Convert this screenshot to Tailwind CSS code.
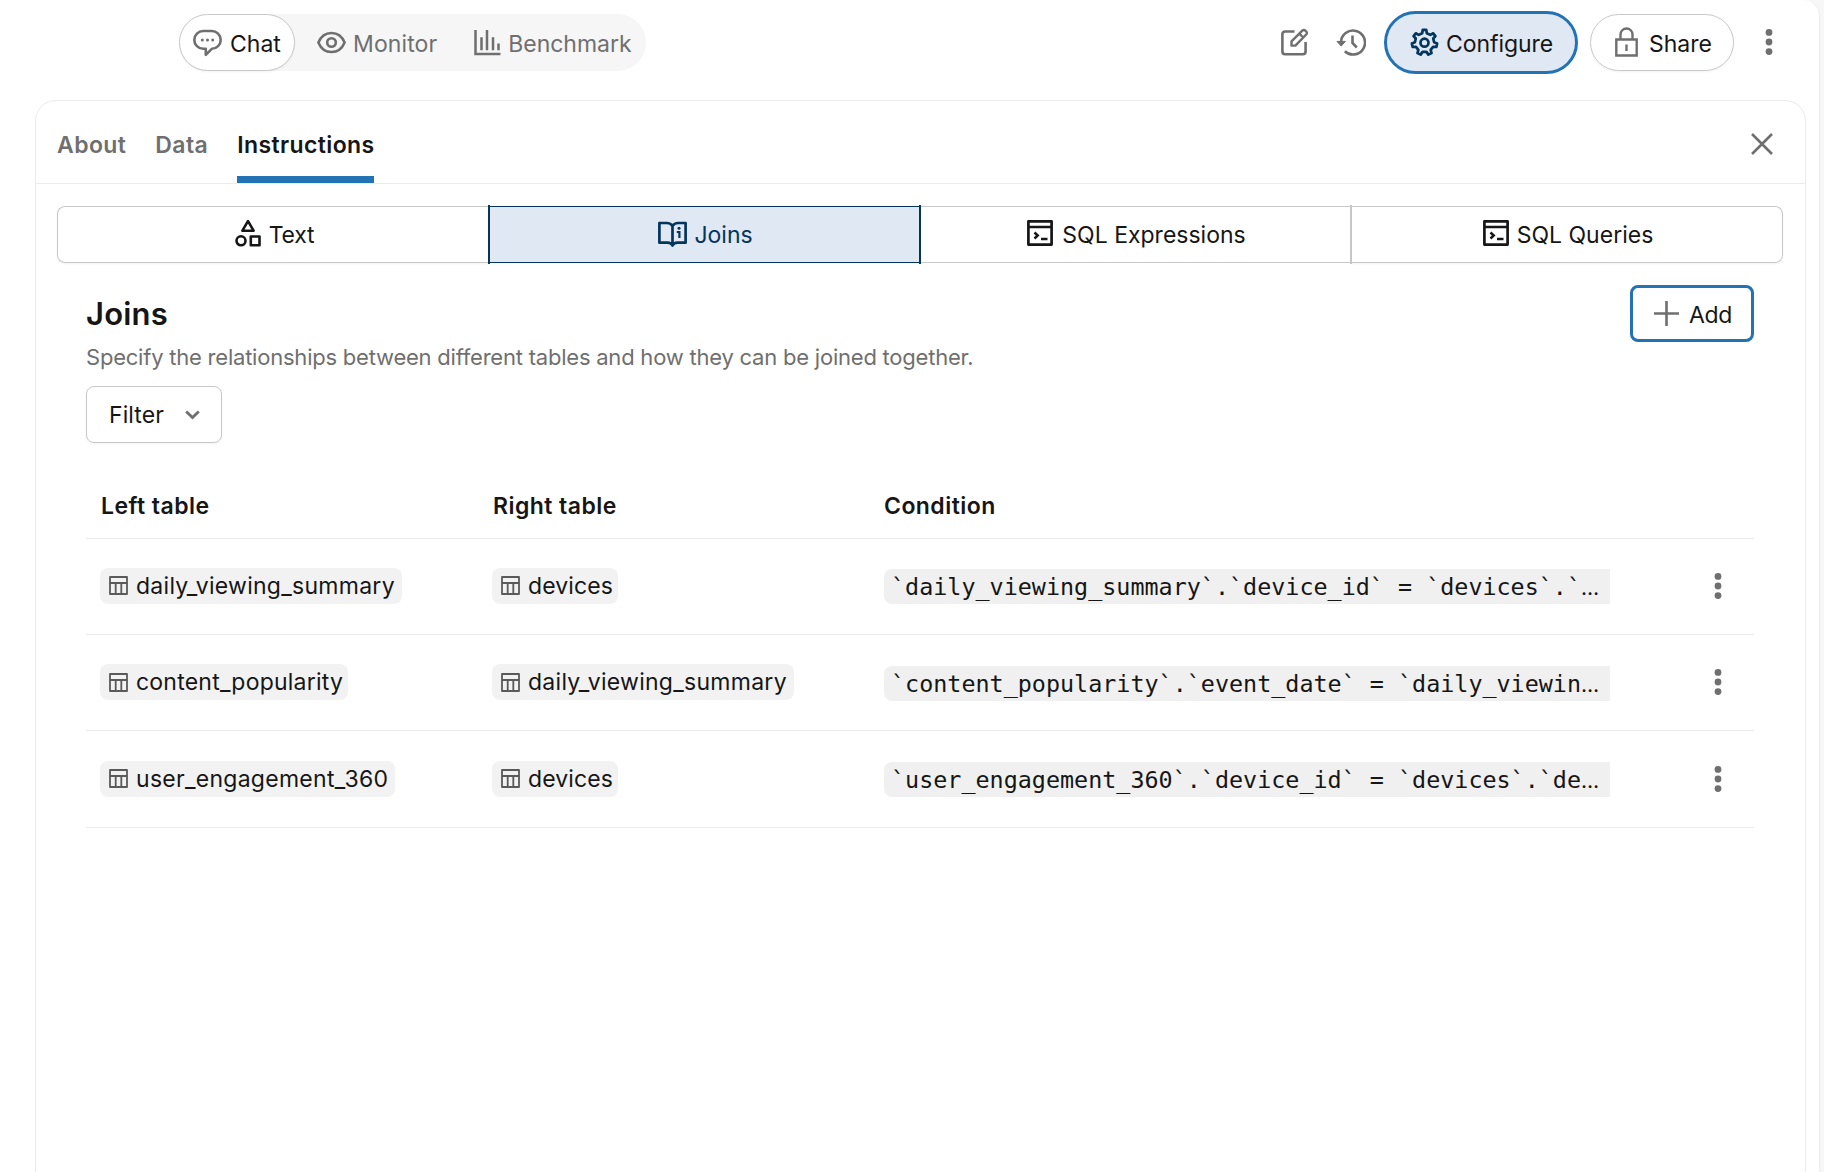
<!DOCTYPE html>
<html lang="en">
  <head>
    <meta charset="UTF-8" />
    <meta name="viewport" content="width=device-width, initial-scale=1.0" />
    <title>Configure - Joins</title>

    <!-- Tailwind CSS -->
    <script src="https://cdn.jsdelivr.net/npm/@tailwindcss/browser@4"></script>
  </head>
  <body class="h-screen overflow-hidden bg-[#f7f7f7] font-['Inter',sans-serif] text-[23px] leading-[30px] text-[#161616]">
    <!-- Shared icons -->
    <svg class="hidden">
      <symbol id="icon-table" viewBox="0 0 19 19">
        <path d="M1 1h17v17H1zM1 7h17M6.7 7v11M12.3 7v11" fill="none" stroke="currentColor" stroke-width="1.8" stroke-linejoin="round" />
      </symbol>
      <symbol id="icon-terminal" viewBox="0 0 26 26">
        <path d="M1.4 1.4h23.2v23.2H1.4zM1.4 7h23.2" fill="none" stroke="currentColor" stroke-width="2.7" stroke-linejoin="round" />
        <path d="M7.5 12.5l3.2 3-3.2 3M14 19h6.5" fill="none" stroke="currentColor" stroke-width="2.5" />
      </symbol>
      <symbol id="icon-kebab" viewBox="0 0 8 28">
        <g fill="currentColor"><circle cx="4" cy="4.4" r="3.4" /><circle cx="4" cy="14" r="3.4" /><circle cx="4" cy="23.6" r="3.4" /></g>
      </symbol>
    </svg>

    <div class="flex h-full w-[1820px] flex-col rounded-tr-2xl border-r border-[#ebebeb] bg-white">
      <!-- Top bar -->
      <header class="flex h-[100px] items-start justify-between pl-[179px] pr-[46px]">
        <nav class="mt-3.5 flex h-[57px] w-[467px] rounded-full bg-[#f6f6f6] text-[#6f6f6f]">
          <button class="flex h-[57px] w-[116px] items-center rounded-full border border-[#c8c8c8] bg-white pl-[13px] shadow-xs">
            <svg class="h-[29px] w-[29px]" viewBox="0 0 29 29" fill="none" stroke="currentColor" stroke-width="2.6" stroke-linejoin="round">
              <path d="M10.2 3h8.6a8.9 8.9 0 0 1 0 17.8l-6 6v-6h-2.6a8.9 8.9 0 0 1 0-17.8z" />
              <g fill="currentColor" stroke="none"><circle cx="9.3" cy="12" r="1.5" /><circle cx="14.5" cy="12" r="1.5" /><circle cx="19.7" cy="12" r="1.5" /></g>
            </svg>
            <span class="ml-2 mt-0.5 text-[#161616]">Chat</span>
          </button>
          <button class="ml-[22px] flex items-center">
            <svg class="h-[29px] w-[29px]" viewBox="0 0 29 29" fill="none" stroke="currentColor" stroke-width="2.6" stroke-linejoin="round">
              <path d="M1.4 14.5C4 8.2 8.8 5 14.5 5s10.5 3.2 13.1 9.500C25 20.8 20.2 24 14.5 24S4 20.8 1.4 14.5z" />
              <circle cx="14.5" cy="14.5" r="4.3" />
            </svg>
            <span class="ml-[7px] mt-0.5 tracking-[0.1px]">Monitor</span>
          </button>
          <button class="ml-[37px] flex items-center">
            <svg class="h-[27px] w-[27px]" viewBox="0 0 27 27" fill="none" stroke="currentColor" stroke-width="2.5">
              <path d="M1.5 1v24h25M7.5 8.2v13M13 1v20.2M19 8.2v13M24.5 14.5v6.7" />
            </svg>
            <span class="ml-[7px] mt-0.5">Benchmark</span>
          </button>
        </nav>

        <div class="flex items-center text-[#6f6f6f]">
          <svg class="mt-2.5 h-[29px] w-[29px]" viewBox="0 0 29 29" fill="none" stroke="currentColor" stroke-width="2.6" stroke-linejoin="round">
            <path d="M14.5 3.5H5A2.6 2.6 0 0 0 2.4 6.100v17.500A2.6 2.6 0 0 0 5 26.200h18a2.6 2.6 0 0 0 2.6-2.6V14" />
            <path d="M11.5 17.600v-4.200L22.300 2.600a2.100 2.100 0 0 1 3 0l.9.900a2.100 2.100 0 0 1 0 3L15.400 17.600zM19.300 5.600l3.900 3.900" stroke-width="2.4" />
          </svg>
          <svg class="ml-[27px] mt-2.5 h-[29px] w-[30px]" viewBox="0 0 30 29" fill="none" stroke="currentColor" stroke-width="2.6">
            <path d="M5 14.500a12 12 0 1 1 3.800 8.800M16.500 7.500v7.400l4.300 4.600" />
            <path d="M1 13.400h8.400l-4.200 4.700z" fill="currentColor" stroke-width="1" stroke-linejoin="round" />
          </svg>
          <button class="ml-[18px] mt-[11px] flex h-[63px] w-[194px] items-center rounded-full border-3 border-[#2272b4] bg-[#dfe8f3] pl-[23px] text-[#161616]">
            <svg class="h-[29px] w-[29px] text-[#04355d]" viewBox="0 0 16 16" fill="none" stroke="currentColor" stroke-width="1.5" stroke-linejoin="round">
              <path d="M6.72 2.86L7.03 1.07H8.97L9.28 2.86 11.22 3.79 12.81 2.92 14.03 4.44 12.82 5.8 13.3 7.89 14.97 8.59 14.54 10.49 12.73 10.4 11.39 12.08 11.88 13.82 10.13 14.67 9.08 13.19H6.92L5.87 14.67 4.12 13.82 4.61 12.08 3.27 10.4 1.46 10.49 1.03 8.59 2.7 7.89 3.18 5.8 1.97 4.44 3.19 2.92 4.78 3.79z" />
              <circle cx="8" cy="8.1" r="2.2" />
            </svg>
            <span class="ml-[7px] mt-0.5 tracking-[-0.05px]">Configure</span>
          </button>
          <button class="ml-3 mt-[11px] flex h-[57px] w-[144px] items-center rounded-full border border-[#c8c8c8] pl-6 shadow-xs">
            <svg class="h-[31px] w-[23px]" viewBox="0 0 23 31" fill="none" stroke="currentColor" stroke-width="2.4">
              <path d="M1.3 12.500h20.4v16H1.300zM5.500 12.500V7.500a6 6 0 0 1 12 0v5M11.500 17.500v6.500" />
            </svg>
            <span class="ml-[11px] mt-0.5 text-[#161616]">Share</span>
          </button>
          <svg class="ml-[31px] mt-2.5 h-7 w-2"><use href="#icon-kebab" /></svg>
        </div>
      </header>

      <!-- Configure panel -->
      <main class="ml-[35px] w-[1771px] flex-1 rounded-t-[21px] border border-b-0 border-[#ebebeb]">
        <div class="flex h-[83px] items-start justify-between border-b border-[#ebebeb] pl-[21px] pr-8">
          <div class="flex gap-[29px] font-semibold tracking-[0.4px] text-[#6f6f6f]">
            <span class="pt-[29px]">About</span>
            <span class="pt-[29px]">Data</span>
            <span class="flex h-[82px] w-[137px] flex-col justify-between whitespace-nowrap pt-[29px] text-[#161616]">
              Instructions
              <span class="h-[7px] bg-[#2272b4]"></span>
            </span>
          </div>
          <svg class="mt-8 h-[22px] w-[22px] text-[#6f6f6f]" viewBox="0 0 22 22" fill="none" stroke="currentColor" stroke-width="2.6">
            <path d="M1 1l20 20M21 1L1 21" />
          </svg>
        </div>

        <!-- Instruction types -->
        <div class="ml-[21px] mt-[21px] flex h-[59px] w-[1726px] items-center">
          <button class="flex h-[57px] w-[431px] items-center justify-center rounded-l-lg border border-r-0 border-[#c8c8c8] pl-[3px] shadow-xs">
            <svg class="mb-1 h-[28px] w-[26px]" viewBox="0 0 26 28" fill="none" stroke="currentColor" stroke-width="2.6" stroke-linejoin="round">
              <path d="M13 2.200L18.600 11.700H7.400zM15.800 17.500h8.700v8.700h-8.700z" />
              <circle cx="6" cy="21.800" r="4.500" />
            </svg>
            <span class="ml-2 tracking-[-0.3px]">Text</span>
          </button>
          <div class="flex h-[59px] w-[433px] items-center border-x-2 border-[#04355d]">
            <button class="flex h-[57px] w-full items-center justify-center border-y border-[#04355d] bg-[#dfe8f3] pl-0.5 text-[#04355d]">
              <svg class="h-[27px] w-[29px]" viewBox="0 0 29 27" fill="none" stroke="currentColor" stroke-width="2.7" stroke-linejoin="round">
                <path d="M14.5 5C13.3 3 11.3 2 8.8 2H1.4v19.7h8.200c2.4 0 4.1.9 4.9 2.8.8-1.9 2.5-2.8 4.9-2.8h8.2V2h-7.4c-2.5 0-4.5 1-5.700 3zM14.5 5v19.5" />
                <path d="M18.8 11h2.6v6" stroke-width="2.2" stroke-linejoin="miter" />
                <circle cx="21" cy="7.3" r="1.5" fill="currentColor" stroke="none" />
              </svg>
              <span class="ml-[7px]">Joins</span>
            </button>
          </div>
          <div class="flex h-[59px] w-[431px] items-center border-r-2 border-[#c8c8c8]">
            <button class="flex h-[57px] w-full items-center justify-center border-y border-[#c8c8c8] pl-0.5">
              <svg class="mb-1 h-[26px] w-[26px]"><use href="#icon-terminal" /></svg>
              <span class="ml-[9px]">SQL Expressions</span>
            </button>
          </div>
          <button class="flex h-[57px] w-[431px] items-center justify-center rounded-r-lg border border-l-0 border-[#c8c8c8] pl-0.5 shadow-xs">
            <svg class="mb-1 h-[26px] w-[26px]"><use href="#icon-terminal" /></svg>
            <span class="ml-2">SQL Queries</span>
          </button>
        </div>

        <!-- Joins -->
        <section class="ml-[50px] mt-[21px] w-[1668px]">
          <div class="flex h-[57px] justify-between">
            <h2 class="pt-[11px] text-[31px] font-semibold leading-9 tracking-[0.2px]">Joins</h2>
            <button class="flex w-[124px] items-center rounded-lg border-3 border-[#2272b4] pl-[21px]">
              <svg class="h-[25px] w-[25px] text-[#6f6f6f]" viewBox="0 0 25 25" fill="none" stroke="currentColor" stroke-width="2.6">
                <path d="M12.5 0v25M0 12.5h25" />
              </svg>
              <span class="ml-2.5 mt-0.5 tracking-[-0.3px]">Add</span>
            </button>
          </div>
          <p class="text-[22px] leading-[30px] tracking-[-0.22px] text-[#6f6f6f]">Specify the relationships between different tables and how they can be joined together.</p>
          <button class="mt-[14px] flex h-[57px] w-[136px] items-center rounded-lg border border-[#c8c8c8] pl-[22px] shadow-xs">
            <span class="mt-px tracking-[0.1px]">Filter</span>
            <svg class="ml-[21px] mt-px h-2.5 w-[15px] text-[#6f6f6f]" viewBox="0 0 15 10" fill="none" stroke="currentColor" stroke-width="2.8">
              <path d="M1.2 1.5l6.300 6 6.300-6" />
            </svg>
          </button>

          <!-- Table -->
          <div class="mt-[31px]">
            <div class="grid h-[65px] grid-cols-[392px_392px_1fr] items-center border-b border-[#ebebeb] pl-[14px] pb-px font-semibold tracking-[0.45px]">
              <span class="pl-px">Left table</span>
              <span class="pl-px">Right table</span>
              <span>Condition</span>
            </div>

            <div class="grid h-24 grid-cols-[392px_392px_726px_1fr] items-center border-b border-[#ebebeb] pl-[14px]">
              <span class="mb-0.5 flex h-9 w-fit items-center rounded-lg bg-[#f2f2f2] pl-[9px] pr-[7px] tracking-[0.28px]">
                <svg class="mr-2 h-[19px] w-[19px] text-[#5a5a5a]"><use href="#icon-table" /></svg>daily_viewing_summary
              </span>
              <span class="mb-0.5 flex h-9 w-fit items-center rounded-lg bg-[#f2f2f2] pl-[9px] pr-[5px] tracking-[0.1px]">
                <svg class="mr-2 h-[19px] w-[19px] text-[#5a5a5a]"><use href="#icon-table" /></svg>devices
              </span>
              <code class="h-[35px] whitespace-pre rounded-l-lg bg-[#f0f0f0] pl-[7px] font-['DejaVu_Sans_Mono',monospace] text-[23.4px] leading-[37px]">`daily_viewing_summary`.`device_id` = `devices`.`<span class="font-['Inter',sans-serif] text-[21px]">…</span></code>
              <button class="mb-px pl-[104px] text-[#6f6f6f]"><svg class="mb-px h-7 w-2"><use href="#icon-kebab" /></svg></button>
            </div>

            <div class="grid h-24 grid-cols-[392px_392px_726px_1fr] items-center border-b border-[#ebebeb] pl-[14px]">
              <span class="mb-px flex h-9 w-fit items-center rounded-lg bg-[#f2f2f2] pl-[9px] pr-[5px] tracking-[0.22px]">
                <svg class="mr-2 h-[19px] w-[19px] text-[#5a5a5a]"><use href="#icon-table" /></svg>content_popularity
              </span>
              <span class="mb-px flex h-9 w-fit items-center rounded-lg bg-[#f2f2f2] pl-[9px] pr-[7px] tracking-[0.28px]">
                <svg class="mr-2 h-[19px] w-[19px] text-[#5a5a5a]"><use href="#icon-table" /></svg>daily_viewing_summary
              </span>
              <code class="mt-px h-[35px] whitespace-pre rounded-l-lg bg-[#f0f0f0] pl-[7px] font-['DejaVu_Sans_Mono',monospace] text-[23.4px] leading-[37px]">`content_popularity`.`event_date` = `daily_viewin<span class="font-['Inter',sans-serif] text-[21px]">…</span></code>
              <button class="mb-px pl-[104px] text-[#6f6f6f]"><svg class="mb-px h-7 w-2"><use href="#icon-kebab" /></svg></button>
            </div>

            <div class="grid h-[97px] grid-cols-[392px_392px_726px_1fr] items-center border-b border-[#ebebeb] pl-[14px]">
              <span class="mb-px flex h-9 w-fit items-center rounded-lg bg-[#f2f2f2] pl-[9px] pr-[7px] tracking-[0.28px]">
                <svg class="mr-2 h-[19px] w-[19px] text-[#5a5a5a]"><use href="#icon-table" /></svg>user_engagement_360
              </span>
              <span class="mb-px flex h-9 w-fit items-center rounded-lg bg-[#f2f2f2] pl-[9px] pr-[5px] tracking-[0.1px]">
                <svg class="mr-2 h-[19px] w-[19px] text-[#5a5a5a]"><use href="#icon-table" /></svg>devices
              </span>
              <code class="h-[35px] whitespace-pre rounded-l-lg bg-[#f0f0f0] pl-[7px] font-['DejaVu_Sans_Mono',monospace] text-[23.4px] leading-[37px]">`user_engagement_360`.`device_id` = `devices`.`de<span class="font-['Inter',sans-serif] text-[21px]">…</span></code>
              <button class="pl-[104px] text-[#6f6f6f]"><svg class="h-7 w-2"><use href="#icon-kebab" /></svg></button>
            </div>
          </div>
        </section>
      </main>
    </div>
  </body>
</html>
